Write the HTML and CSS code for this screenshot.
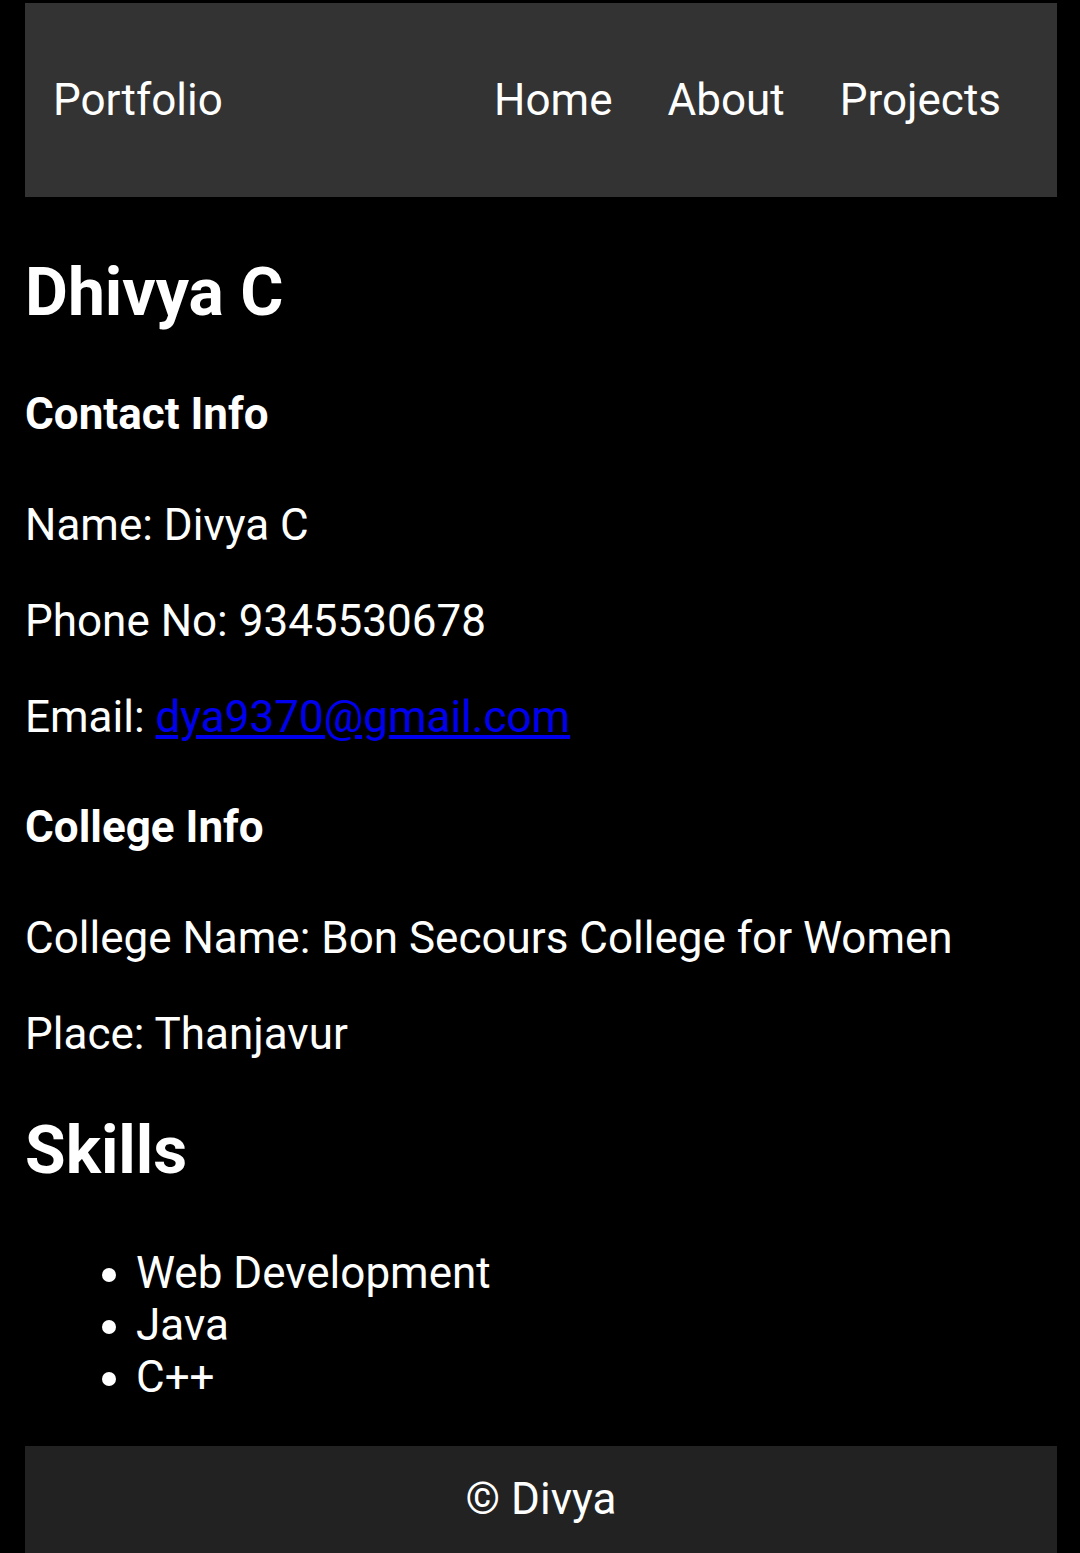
FILE: index.html
```html
<!DOCTYPE html>
<html lang="en">
<head>
<meta charset="utf-8">
<title>Portfolio</title>
<link rel="stylesheet" href="styles.css">
</head>
<body>
<header class="site-header">
  <div class="brand">Portfolio</div>
  <nav class="nav">
    <a class="nav-link" href="#">Home</a>
    <a class="nav-link" href="#">About</a>
    <a class="nav-link" href="#">Projects</a>
  </nav>
</header>
<main class="content">
  <h1 class="name">Dhivya C</h1>
  <h3 class="section-title">Contact Info</h3>
  <p class="info">Name: Divya C</p>
  <p class="info">Phone No: 9345530678</p>
  <p class="info">Email: <a class="mail" href="#">dya9370@gmail.com</a></p>
  <h3 class="section-title">College Info</h3>
  <p class="info">College Name: Bon Secours College for Women</p>
  <p class="info">Place: Thanjavur</p>
  <h2 class="skills-title">Skills</h2>
  <ul class="skills">
    <li>Web Development</li>
    <li>Java</li>
    <li>C++</li>
  </ul>
</main>
<footer class="site-footer">© Divya</footer>
</body>
</html>
```
FILE: styles.css
```css
html {
  background: #000;
}
body {
  margin: 0;
  padding: 3px 23px 0 25px;
  background: #000;
  color: #fff;
  font-family: Roboto, "Liberation Sans", sans-serif;
}
.site-header {
  height: 194px;
  background: #333;
  display: flex;
  align-items: center;
  justify-content: space-between;
  padding: 0 56px 0 28px;
  box-sizing: border-box;
  font-size: 44px;
}
.nav {
  display: flex;
  gap: 55px;
}
.nav-link {
  color: #fff;
  text-decoration: none;
}
.content {
  display: flow-root;
}
.name {
  font-size: 66px;
  font-weight: 700;
  line-height: 78px;
  margin: 57px 0 60px;
}
.section-title {
  font-size: 44px;
  font-weight: 700;
  line-height: 44px;
  margin: 59px 0 60px;
}
.info {
  font-size: 44px;
  line-height: 58px;
  margin: 38px 0;
}
.mail {
  color: #0000ee;
}
.skills-title {
  font-size: 66px;
  font-weight: 700;
  line-height: 62px;
  margin: 57px 0 65px;
}
.skills {
  margin: 0 0 43px;
  padding-left: 111px;
  font-size: 44px;
  line-height: 52px;
}
.site-footer {
  background: #222;
  text-align: center;
  font-size: 44px;
  line-height: 50px;
  padding: 28px 0 29px;
}
```
